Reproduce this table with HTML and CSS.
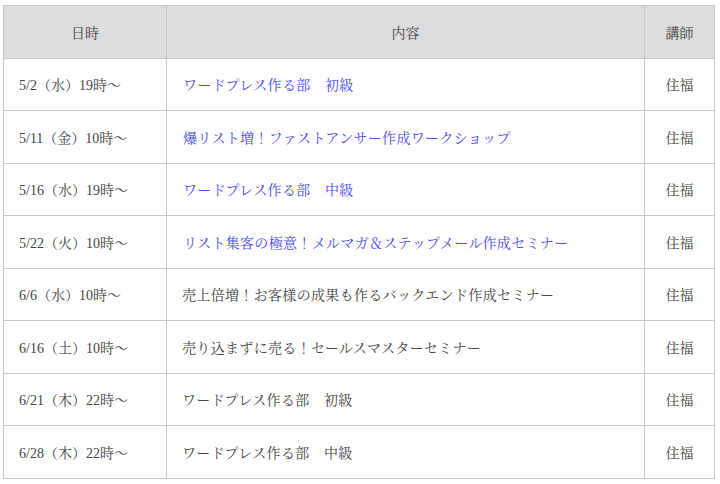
FILE: index.html
```html
<!DOCTYPE html>
<html lang="ja">
<head>
<meta charset="utf-8">
<link rel="stylesheet" href="styles.css">
</head>
<body>
<table class="schedule">
  <thead>
    <tr><th class="c-date">日時</th><th class="c-body">内容</th><th class="c-who">講師</th></tr>
  </thead>
  <tbody>
    <tr><td>5/2（水）19時～</td><td class="body"><a href="#">ワードプレス作る部　初級</a></td><td class="who">住福</td></tr>
    <tr><td>5/11（金）10時～</td><td class="body"><a href="#">爆リスト増！ファストアンサー作成ワークショップ</a></td><td class="who">住福</td></tr>
    <tr><td>5/16（水）19時～</td><td class="body"><a href="#">ワードプレス作る部　中級</a></td><td class="who">住福</td></tr>
    <tr><td>5/22（火）10時～</td><td class="body"><a href="#">リスト集客の極意！メルマガ＆ステップメール作成セミナー</a></td><td class="who">住福</td></tr>
    <tr><td>6/6（水）10時～</td><td class="body">売上倍増！お客様の成果も作るバックエンド作成セミナー</td><td class="who">住福</td></tr>
    <tr><td>6/16（土）10時～</td><td class="body">売り込まずに売る！セールスマスターセミナー</td><td class="who">住福</td></tr>
    <tr><td>6/21（木）22時～</td><td class="body">ワードプレス作る部　初級</td><td class="who">住福</td></tr>
    <tr><td>6/28（木）22時～</td><td class="body">ワードプレス作る部　中級</td><td class="who">住福</td></tr>
  </tbody>
</table>
</body>
</html>
```

FILE: styles.css
```css
html, body {
  margin: 0;
  padding: 0;
  background: #fff;
}
body {
  padding: 5px 6px 0 3px;
  font-family: "Liberation Serif", "Noto Serif CJK JP", "Noto Sans CJK JP", serif;
  font-size: 14px;
  color: #444;
}
.schedule {
  width: 711px;
  border-collapse: collapse;
  table-layout: fixed;
}
.schedule th,
.schedule td {
  border: 1px solid #c8c8c8;
  height: 52.5px;
  padding: 0 15px;
  box-sizing: border-box;
  vertical-align: middle;
  text-align: left;
  font-weight: normal;
}
.schedule th {
  background: #dddddd;
  text-align: center;
  color: #444;
}
.c-date { width: 163px; }
.c-body { width: 478px; }
.c-who { width: 70px; }
.schedule td.body {
  letter-spacing: 0.33px;
}
.schedule td.who {
  text-align: center;
  padding: 0;
}
.schedule a {
  color: #4a4af0;
  text-decoration: none;
  padding-left: 1px;
}
```
